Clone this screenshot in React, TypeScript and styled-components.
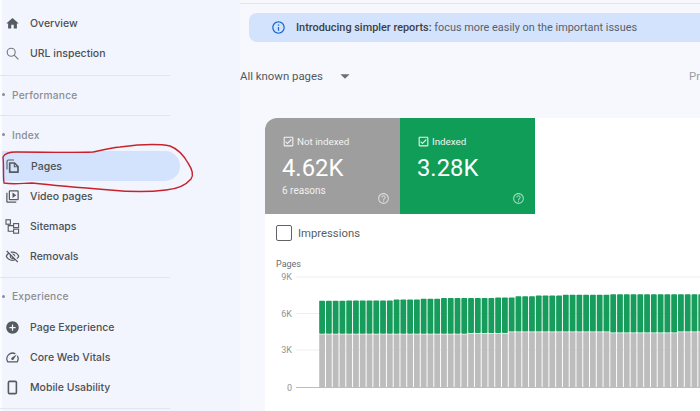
import styled, { createGlobalStyle } from 'styled-components'
import {
    MdHome,
    MdOutlineVideoLibrary,
    MdOutlineVisibilityOff,
    MdAddCircle,
    MdOutlineSpeed,
    MdOutlineCheckBox,
    MdHelpOutline,
    MdInfoOutline,
    MdArrowDropDown,
} from 'react-icons/md'
import type { ReactNode } from 'react'

const GlobalStyle = createGlobalStyle`
    html, body {
        margin: 0;
        height: 100%;
        overflow: hidden;
        background: #f6f8fe;
    }
    * {
        box-sizing: border-box;
    }
`

const Page = styled.div`
    display: flex;
    position: relative;
    width: 700px;
    height: 411px;
    overflow: hidden;
    font-family: Roboto, sans-serif;
`

const Sidebar = styled.nav`
    flex: 0 0 240px;
    display: flex;
    flex-direction: column;
    padding: 8px 0 0 2px;
    background: #f2f5fd;
    box-shadow: inset 2px 0 0 #fbfcff;
    font-family: Inter, sans-serif;
`

const Row = styled.div<{ $active?: boolean }>`
    flex: 0 0 30px;
    display: flex;
    align-items: center;
    width: 178px;
    padding-left: 3px;
    gap: 10px;
    border-radius: 0 15px 15px 0;
    font-size: 10.5px;
    font-weight: 500;
    color: #4c5055;
    background: ${props => (props.$active ? '#d3e3fd' : 'transparent')};
`

const IconSlot = styled.span`
    flex: 0 0 15px;
    display: flex;
    justify-content: center;
    color: #565b60;
    font-size: 15px;
`

const Divider = styled.hr<{ $top: number }>`
    flex: 0 0 1px;
    width: 170px;
    margin: ${props => props.$top}px 0 0 -2px;
    border: 0;
    background: #e2e5ec;
`

const SectionTitle = styled.div<{ $height: number }>`
    flex: 0 0 ${props => props.$height}px;
    display: flex;
    align-items: center;
    gap: 7px;
    padding-top: 2px;
    font-size: 10.2px;
    font-weight: 500;
    letter-spacing: 0.2px;
    color: #8a8e93;
`

const Bullet = styled.span`
    width: 3px;
    height: 3px;
    border-radius: 50%;
    background: #8a8e93;
`

const Main = styled.main`
    flex: 1;
    min-width: 0;
    display: flex;
    flex-direction: column;
    padding-top: 3px;
`

const TopRule = styled.div`
    height: 1px;
    background: #e3e6ec;
`

const Banner = styled.div`
    height: 29px;
    margin: 9px 0 0 9px;
    display: flex;
    align-items: center;
    gap: 10px;
    padding-left: 22px;
    border-radius: 8px 0 0 8px;
    background: #d3e3fd;
    font-size: 10.9px;
    color: #5a6069;
    white-space: nowrap;

    svg {
        color: #1a68d0;
        font-size: 15px;
    }

    b {
        font-weight: 500;
        color: #3c4043;
    }
`

const FilterRow = styled.div`
    height: 76px;
    display: flex;
    align-items: center;
    justify-content: space-between;
    padding-bottom: 8px;
    font-size: 11.4px;
    color: #54585c;
`

const Select = styled.div`
    display: flex;
    align-items: center;
    gap: 11px;
    white-space: nowrap;

    svg {
        font-size: 22px;
        color: #6b6f73;
    }
`

const Cropped = styled.span`
    color: #9a9ea3;
`

const Card = styled.section`
    flex: 1;
    margin-left: 25px;
    border-top-left-radius: 12px;
    background: #fff;
    overflow: hidden;
`

const Tiles = styled.div`
    display: flex;
    height: 96px;
`

const Tile = styled.div<{ $color: string }>`
    position: relative;
    width: 135px;
    padding: 16px 17px 0;
    background: ${props => props.$color};
    color: #fff;
`

const TileLabel = styled.div`
    display: flex;
    align-items: center;
    gap: 2px;
    height: 14px;
    font-size: 9.8px;
    color: #f2f2f2;

    svg {
        font-size: 13px;
    }
`

const TileValue = styled.div`
    margin-top: 5px;
    font-size: 23.8px;
    line-height: 30px;
`

const TileNote = styled.div`
    margin-top: 2px;
    font-size: 10px;
    color: #f0f0f0;
`

const TileHelp = styled.span`
    position: absolute;
    right: 10px;
    bottom: 9px;
    display: flex;
    font-size: 13px;
    color: rgba(255, 255, 255, 0.6);
`

const Impressions = styled.label`
    height: 38px;
    display: flex;
    align-items: center;
    gap: 6px;
    padding-left: 11px;
    font-size: 11.3px;
    color: #5a5e62;
`

const EmptyBox = styled.span`
    width: 16px;
    height: 16px;
    border: 1.5px solid #5f6368;
    border-radius: 2px;
`

const ChartTitle = styled.div`
    padding: 7px 0 0 11px;
    font-size: 9px;
    line-height: 11px;
    color: #6a6e72;
`

const Chart = styled.svg`
    display: block;
    width: 435px;
    height: 141px;

    text {
        font-family: Roboto, sans-serif;
        font-size: 9px;
        fill: #8f9397;
        text-anchor: end;
    }
`

const Scribble = styled.svg`
    position: absolute;
    left: 0;
    top: 0;
    width: 200px;
    height: 200px;
    pointer-events: none;
`

const PagesIcon = () => (
    <svg width="16" height="16" viewBox="0 0 16 16" fill="none" stroke="currentColor">
        <path d="M2 11.5V3.5C2 2.6 2.6 2 3.5 2H9" strokeWidth="1.1" />
        <path d="M4.7 5H9.5L13 8.5V14.2H4.7Z" strokeWidth="1.7" strokeLinejoin="round" />
        <path d="M9.3 5V8.7H13" strokeWidth="1.1" />
    </svg>
)

const SearchIcon = () => (
    <svg width="15" height="15" viewBox="0 0 15 15" fill="none" stroke="#72767b" strokeWidth="1.1">
        <circle cx="6.2" cy="6.2" r="4" />
        <path d="M9.2 9.2L13.4 13.4" />
    </svg>
)

const SitemapIcon = () => (
    <svg width="15" height="15" viewBox="0 0 15 15" fill="none" stroke="currentColor" strokeWidth="1.1">
        <rect x="1" y="0.8" width="4.4" height="4.4" />
        <rect x="8.6" y="4.6" width="5" height="4" />
        <rect x="8.6" y="10.2" width="5" height="4" />
        <path d="M3.2 5.2V12.2H8.6M3.2 6.6H8.6" />
    </svg>
)

const MobileIcon = () => (
    <svg width="15" height="15" viewBox="0 0 15 15" fill="none" stroke="currentColor" strokeWidth="1.6">
        <rect x="3.4" y="1.4" width="8" height="12.2" rx="1.2" />
    </svg>
)

function NavRow({ icon, label, active }: { icon: ReactNode; label: string; active?: boolean }) {
    return (
        <Row $active={active}>
            <IconSlot>{icon}</IconSlot>
            {label}
        </Row>
    )
}

function Section({ label, height = 35 }: { label: string; height?: number }) {
    return (
        <SectionTitle $height={height}>
            <Bullet />
            {label}
        </SectionTitle>
    )
}

// y of the top of the green part, by range of bar index
const greenTop = (i: number) => {
    const steps: [number, number][] = [
        [4, 300.8], [11, 300.4], [15, 299.4], [18, 298.8], [26, 298],
        [29, 297.4], [32, 296.2], [36, 295.4], [43, 294.8], [99, 294.2],
    ]
    return steps.find(s => i < s[0])![1]
}

const greyTop = (i: number) => {
    if (i < 22) return 334.4
    if (i < 28) return 333.6
    if (i < 43) return 332.2
    if (i < 53) return 333.2
    return 332.2
}

const CHART_TOP = 256
const bars = Array.from({ length: 57 }, (_, i) => i)
const ticks = [
    { label: '9K', y: 277 },
    { label: '6K', y: 313.5 },
    { label: '3K', y: 350 },
    { label: '0', y: 387.5 },
]

export default function App() {
    return (
        <Page>
            <GlobalStyle />
            <Sidebar>
                <NavRow icon={<MdHome />} label="Overview" />
                <NavRow icon={<SearchIcon />} label="URL inspection" />
                <Divider $top={7} />
                <Section label="Performance" />
                <Divider $top={4} />
                <Section label="Index" />
                <NavRow icon={<PagesIcon />} label="Pages" active />
                <NavRow icon={<MdOutlineVideoLibrary />} label="Video pages" />
                <NavRow icon={<SitemapIcon />} label="Sitemaps" />
                <NavRow icon={<MdOutlineVisibilityOff />} label="Removals" />
                <Divider $top={6} />
                <Section label="Experience" height={34} />
                <NavRow icon={<MdAddCircle />} label="Page Experience" />
                <NavRow icon={<MdOutlineSpeed />} label="Core Web Vitals" />
                <NavRow icon={<MobileIcon />} label="Mobile Usability" />
                <Divider $top={6} />
            </Sidebar>
            <Main>
                <TopRule />
                <Banner>
                    <MdInfoOutline />
                    <span><b>Introducing simpler reports:</b> focus more easily on the important issues</span>
                </Banner>
                <FilterRow>
                    <Select>
                        All known pages
                        <MdArrowDropDown />
                    </Select>
                    <Cropped>Pr</Cropped>
                </FilterRow>
                <Card>
                    <Tiles>
                        <Tile $color="#9e9e9e">
                            <TileLabel><MdOutlineCheckBox />Not indexed</TileLabel>
                            <TileValue>4.62K</TileValue>
                            <TileNote>6 reasons</TileNote>
                            <TileHelp><MdHelpOutline /></TileHelp>
                        </Tile>
                        <Tile $color="#0f9d58">
                            <TileLabel><MdOutlineCheckBox />Indexed</TileLabel>
                            <TileValue>3.28K</TileValue>
                            <TileHelp><MdHelpOutline /></TileHelp>
                        </Tile>
                    </Tiles>
                    <Impressions>
                        <EmptyBox />
                        Impressions
                    </Impressions>
                    <ChartTitle>Pages</ChartTitle>
                    <Chart viewBox={`265 ${CHART_TOP + 14} 435 141`}>
                        {ticks.map(t => (
                            <g key={t.label}>
                                <text x="292" y={t.y + 3}>{t.label}</text>
                                <line x1="296" x2="700" y1={t.y} y2={t.y} stroke={t.label === '0' ? '#bdbdbd' : '#eeeeee'} />
                            </g>
                        ))}
                        {bars.map(i => {
                            const x = 319.2 + i * 6.77
                            return (
                                <g key={i}>
                                    <rect x={x} y={greyTop(i)} width="5.8" height={387.8 - greyTop(i)} fill="#bdbdbd" />
                                    <rect x={x} y={greenTop(i)} width="5.8" height={greyTop(i) - greenTop(i) - 0.6} rx="0.8" fill="#169c5b" />
                                </g>
                            )
                        })}
                    </Chart>
                </Card>
            </Main>
            <Scribble viewBox="0 0 200 200" fill="none">
                <path
                    d="M3 157C5 153 9 152 16 152C40 152 70 153 93 152C102 150 110 148 120 147C135 145 155 143 170 146C178 149 184 156 188 163C192 169 194 175 191 179C186 185 177 189 166 190C150 192 130 192 110 190C85 188 60 186 32 183C24 183 14 185 4 183C3 175 4 166 3 157Z"
                    stroke="#c8222c"
                    strokeWidth="1.4"
                />
            </Scribble>
        </Page>
    )
}
